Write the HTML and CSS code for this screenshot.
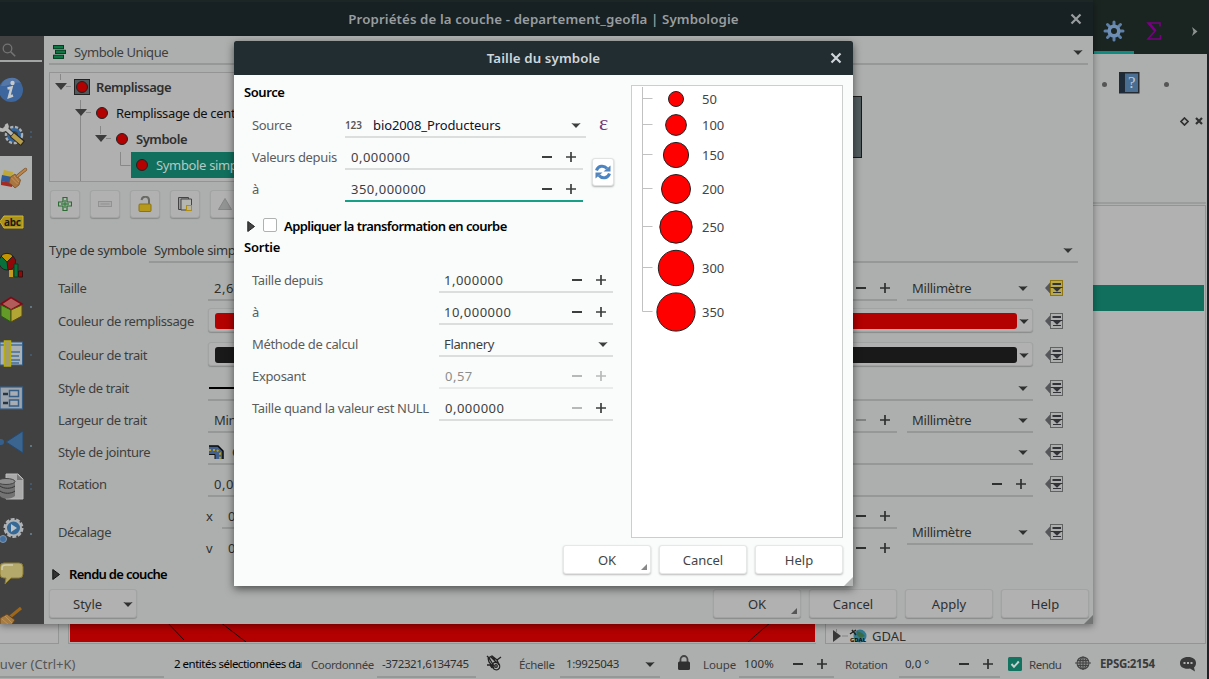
FILE: index.html
```html
<!DOCTYPE html>
<html lang="fr">
<head>
<meta charset="utf-8">
<title>Taille du symbole</title>
<link rel="stylesheet" href="styles.css">
</head>
<body>
<svg class="defs" width="0" height="0">
  <symbol id="minus" viewBox="0 0 24 24"><path d="M7 12h10" stroke="currentColor" stroke-width="2"/></symbol>
  <symbol id="plus" viewBox="0 0 24 24"><path d="M7 12h10M12 7v10" stroke="currentColor" stroke-width="1.7"/></symbol>
  <symbol id="down" viewBox="0 0 20 20"><path d="M5.300 8q4.700 1.200 9.400 0L10 13z" fill="currentColor"/></symbol>
  <symbol id="close" viewBox="0 0 12 12"><path d="M1.5 1.5l9 9M10.500 1.500l-9 9" stroke="currentColor" stroke-width="2.200"/></symbol>
  <symbol id="dd" viewBox="0 0 18 16">
    <path d="M0 8l5-5.500v11z" fill="#55575a" stroke="none"/>
    <rect class="ddbox" x="5.500" y=".5" width="12" height="15" stroke-width="1"/>
    <path d="M7.500 4h8.500" stroke="#313338" stroke-width="2"/><path d="M5.500 7.500h12M8 12.500h8" stroke="#313338" stroke-width="1"/><path d="M7.500 7.500h9L12 11.800z" fill="#313338" stroke="none"/>
  </symbol>
</svg>
<div class="app">
  <div class="topbar">
    <div class="tab"><svg width="22" height="22" viewBox="-11 -11 22 22"><g stroke="#5e80a8" stroke-width="3" stroke-linecap="round"><path d="M0-9V-5M0 9V5M-9 0H-5M9 0H5M-6.500-6.500l3 3M6.500 6.500l-3-3M-6.500 6.500l3-3M6.500-6.500l-3 3"/></g><circle r="4.800" fill="none" stroke="#6d8db3" stroke-width="3.600"/></svg></div>
    <div class="sigma"><svg width="16" height="20" viewBox="0 0 16 20"><path d="M14 5.500V2H2l7 8-7 8h12.500v-4" fill="none" stroke="#780083" stroke-width="1.600"/><path d="M3 2l6.500 8" stroke="#780083" stroke-width="2.500"/></svg></div>
    <svg class="more" width="6" height="9" viewBox="0 0 6 9"><path d="M0 0l5.500 4.500L0 9l1.500-4.500z" fill="#8c9290"/></svg>
  </div>
  <div class="work">
    <div class="browserpane"></div>
    <div class="map"><svg width="746" height="20" viewBox="0 0 746 20"><path d="M97 0l17 18M150 0l26 20M701 0l-23 20" stroke="#1b1111"/></svg></div>
    <div class="rightpane">
      <div class="helpbar"><i class="dot"></i><svg width="21" height="22" viewBox="0 0 21 22"><rect x=".75" y=".75" width="19" height="20" fill="#4a6d92" stroke="#252a31" stroke-width="1.500"/><rect x="1" y="1" width="5" height="20" fill="#1e2a38"/><text x="9" y="16" class="qm">?</text></svg><i class="dot"></i></div>
      <div class="dockbar"><svg width="9" height="9" viewBox="0 0 9 9"><path d="M4.500 1L8 4.500 4.500 8 1 4.500z" fill="none" stroke="#303030" stroke-width="1.700"/></svg><svg width="8" height="8" viewBox="0 0 8 8"><path d="M1 1l6 6M7 1L1 7" stroke="#303030" stroke-width="2.200"/></svg></div>
      <div class="toolbox">
        <div class="picked"></div>
        <div class="gdal"><svg width="40" height="14" viewBox="0 0 40 14"><path d="M3 1l8 6-8 6z" fill="#383838" /><path d="M6.500 0v3M12 7h6" stroke="#858585"/><circle cx="30" cy="7" r="6.500" fill="#337c91"/><path d="M27 2l5 2 3 3-5 2-3-3z" fill="#386b45"/><path d="M20 5l6-4M22 1l4 5" stroke="#222" stroke-width="1.500"/><text x="20" y="13" class="gd">GDAL</text></svg><span>GDAL</span></div>
      </div>
    </div>
  </div>
  <div class="status">
    <div class="locate">ouver (Ctrl+K)</div>
    <div class="msg">2 entités sélectionnées dans</div>
    <div class="s-label l-coord">Coordonnée</div><div class="s-field f-coord">-372321,6134745</div>
    <svg class="mouse" width="16" height="16" viewBox="0 0 16 16"><g fill="none" stroke="#222" stroke-width="1.300"><path d="M2 3l4-2 5 4 2 5M2 3l1 4 5 6M5 2l6 6M1 10h3l2 3M11 5l4-3M3 3l5 8M7 2l3 6M1 1l3 3"/><ellipse cx="10" cy="11" rx="3.500" ry="4" transform="rotate(-35 10 11)"/><circle cx="10" cy="11" r="1.300"/></g></svg>
    <div class="s-label l-scale">Échelle</div><div class="s-field f-scale"><span>1:9925043</span><svg class="i20"><use href="#down"/></svg></div>
    <svg class="lock" width="12" height="15" viewBox="0 0 12 15"><path d="M2.500 7V4.500a3.500 3.500 0 0 1 7 0V7" fill="none" stroke="#444" stroke-width="1.800"/><rect y="6.500" width="12" height="8.500" rx="1.500" fill="#303030"/></svg>
    <div class="s-label l-zoom">Loupe</div><div class="s-field f-zoom"><span>100%</span><svg class="i24"><use href="#minus"/></svg><svg class="i24"><use href="#plus"/></svg></div>
    <div class="s-label l-rot">Rotation</div><div class="s-field f-rot"><span>0,0 °</span><svg class="i24"><use href="#minus"/></svg><svg class="i24"><use href="#plus"/></svg></div>
    <svg class="check" width="14" height="14" viewBox="0 0 14 14"><rect width="14" height="14" rx="1.500" fill="#117360"/><path d="M3.500 7l2.500 2.800L10.800 4.500" fill="none" stroke="#c8d0ce" stroke-width="2"/></svg>
    <div class="s-label l-render">Rendu</div>
    <svg class="globe" width="16" height="15" viewBox="0 0 16 15"><circle cx="8" cy="7" r="6" fill="#8a8b8b"/><g fill="none" stroke="#444" stroke-width="1.100"><circle cx="8" cy="7" r="6"/><ellipse cx="8" cy="7" rx="3" ry="6"/><path d="M8 1v13M0 7h16M2 4.500h12M2 9.500h12"/></g></svg>
    <div class="epsg">EPSG:2154</div>
    <svg class="bubble" width="16" height="15" viewBox="0 0 16 15"><path d="M8 0c5 0 8 2.500 8 6 0 2-1 3.500-2 4.500l1 4-5-3C4 12.500 0 10 0 6.200 0 2.500 3 0 8 0z" fill="#393939"/><path d="M3.500 6h2M7 6h2M10.500 6h2" stroke="#b0b0b0" stroke-width="2"/></svg>
  </div>
</div>

<div class="win props">
  <div class="bar"><span>Propriétés de la couche - departement_geofla | Symbologie</span><svg class="x"><use href="#close"/></svg></div>
  <div class="content">
    <nav class="side">
      <div class="find"><svg width="14" height="14" viewBox="0 0 14 14"><circle cx="5.500" cy="5.500" r="4.300" fill="none" stroke="#737473" stroke-width="1.300"/><path d="M8.700 8.700l4.500 4.500" stroke="#737473" stroke-width="1.600"/></svg></div>
      <svg class="nv" viewBox="0 0 32 44"><circle cx="11" cy="22" r="12" fill="#3c669d"/><path d="M1 18a11 11 0 0 1 20-3c-8-2-12 4-20 3z" fill="#5477a8"/><circle cx="12.500" cy="15" r="2.200" fill="#c6c9cc"/><path d="M7.500 20.500l4-1-2.500 9.500 4-1.500" fill="none" stroke="#c6c9cc" stroke-width="2.500"/></svg>
      <svg class="nv" viewBox="0 0 32 44"><circle cx="14" cy="23" r="7.500" fill="none" stroke="#a9b0b7" stroke-width="3.500" stroke-dasharray="3 1.500"/><circle cx="14" cy="23" r="5.500" fill="none" stroke="#31649a" stroke-width="3"/><path d="M5 16l10 9" stroke="#33332f" stroke-width="5.500"/><path d="M-1 17c5 3 10-1 7-5" fill="none" stroke="#b7b7b5" stroke-width="3.500"/><path d="M4 15l10 9" stroke="#b7b7b5" stroke-width="3.500"/><path d="M12 22.500l11 9" stroke="#2a2722" stroke-width="6.500"/><path d="M12.500 23l9.500 8" stroke="#b59d4b" stroke-width="4.500"/><path d="M31 19v2M31 24v2" stroke="#467199"/></svg>
      <svg class="nv sel" viewBox="0 0 32 44"><path d="M4 14l9 2-1 7-10-2z" fill="#c0a838"/><path d="M2 19l10 2-2 6-9-2z" fill="#315b97"/><path d="M1 25l12 2-1 4-11-2z" fill="#a32b24"/><path d="M10.500 21l4.500-3 5.500 6-1.500 5-4 3-3-3-3-2z" fill="#a97540" stroke="#7a5027" stroke-width=".8"/><path d="M11.500 22l6 6M14 20l5 6" stroke="#c89258"/><path d="M17.500 20l8-6.500" stroke="#7a5027" stroke-width="3.400" stroke-linecap="round"/><path d="M17.500 20l8-6.500" stroke="#bd864c" stroke-width="2.200" stroke-linecap="round"/></svg>
      <svg class="nv" viewBox="0 0 32 44"><path d="M0 21.500l4-5.500h19v12H4z" fill="#ad9319" stroke="#d0b72d"/><text x="4" y="26" class="abc">abc</text></svg>
      <svg class="nv" viewBox="0 0 32 44"><circle cx="7" cy="18" r="8" fill="#08713b" stroke="#222"/><path d="M7 18L1 12a8 8 0 0 1 12 0z" fill="#c29500" stroke="#222"/><path d="M7 18l6-6a8 8 0 0 1-5 14z" fill="#920808" stroke="#222"/><path d="M9 26h4v7H9z" fill="#c49a20"/><path d="M14 20h4v13h-4z" fill="#08713b" stroke="#15351f"/><path d="M18.500 27h4v6h-4z" fill="#920808" stroke="#321111"/></svg>
      <svg class="nv" viewBox="0 0 32 44"><path d="M1 16l10-6.500L22 16l-11 6z" fill="#b25c5c" stroke="#800a14" stroke-width="1.500"/><path d="M1 17l10 5v12L1 28z" fill="#649a27" stroke="#285d0b"/><path d="M22 17l-11 5v12l11-6z" fill="#b3a535" stroke="#5a4810"/><path d="M31 18v2" stroke="#83a8c3"/></svg>
      <svg class="nv" viewBox="0 0 32 44"><rect x="0" y="10" width="22.500" height="23" fill="#a9b0b6" stroke="#365e85"/><path d="M0 13h22M8 20h12M8 24h11M8 28h12M8 31h11" stroke="#446f95" stroke-width="1.600"/><rect x="4.500" y="9" width="6" height="25" fill="#a39c68" stroke="#b7ad10" stroke-width="1.500"/><path d="M31 22v2" stroke="#467199"/></svg>
      <svg class="nv" viewBox="0 0 32 44"><rect x="0" y="11" width="22.500" height="22" fill="#9ba4ad" stroke="#365e85" stroke-width="1.200"/><path d="M3 18h5M3 27h5" stroke="#263642" stroke-width="2.500"/><rect x="9.500" y="14.500" width="9" height="6" fill="#a7adb2" stroke="#365e85" stroke-width="1.500"/><rect x="9.500" y="24" width="9" height="6" fill="#a7adb2" stroke="#365e85" stroke-width="1.500"/></svg>
      <svg class="nv" viewBox="0 0 32 44"><circle cx="1" cy="22" r="3" fill="#365f8b"/><path d="M6 22l17-11v22z" fill="#3b648e" stroke="#254b73"/><path d="M31 25v2" stroke="#83a8c3"/></svg>
      <svg class="nv" viewBox="0 0 32 44"><path d="M6 10h12l5 5v20H6z" fill="#aaa" stroke="#bbb"/><path d="M17 10v6h6" fill="#777"/><path d="M0 17v15c3 4 12 3 15 0V17z" fill="#737373"/><path d="M0 22c4 3 11 3 15 0M0 27c4 3 11 3 15 0" fill="none" stroke="#333"/><ellipse cx="6" cy="17.500" rx="9" ry="3" fill="#8d8d8d" stroke="#444"/><path d="M31 19v2M31 24v2" stroke="#467199"/></svg>
      <svg class="nv" viewBox="0 0 32 44"><circle cx="13.500" cy="20" r="8.500" fill="none" stroke="#b0b3b6" stroke-width="3" stroke-dasharray="3.700 1.600"/><circle cx="13.500" cy="20" r="7.500" fill="#356894" stroke="#aeb2b5" stroke-width="2"/><path d="M11 16l6 4-6 4z" fill="#bdc4c9"/><circle cx="3" cy="31" r="3.500" fill="#4370a0" stroke="#8295a8"/><path d="M31 25v2" stroke="#83a8c3"/></svg>
      <svg class="nv" viewBox="0 0 32 44"><path d="M4 11h15q4 0 4 4v7q0 4-4 4h-8l-6 6 1-6H4q-4 0-4-4v-7q0-4 4-4z" fill="#b4a96a" stroke="#8d7d31"/><path d="M2 18v-2q0-3 4-3h7" fill="none" stroke="#cfcbb1" stroke-width="1.500"/></svg>
      <svg class="nv last" viewBox="0 0 32 28"><path d="M10 21L21 12" stroke="#9e671a" stroke-width="3"/><path d="M0 22l7-4 8 6-4 6H0z" fill="#a77c43" stroke="#64421d"/><path d="M2 23l7 6M5 20l7 7" stroke="#c19256"/></svg>
    </nav>
    <div class="main">
      <div class="renderer"><svg width="13" height="14" viewBox="0 0 13 14"><g fill="#087942" stroke="#043c21"><rect x=".5" y=".5" width="10" height="3.200"/><rect x="2.500" y="5.300" width="10" height="3.200"/><rect x=".5" y="10.200" width="10" height="3.200"/></g></svg><span>Symbole Unique</span><svg class="i20"><use href="#down"/></svg></div>
      <div class="symrow">
        <div class="tree">
          <div class="node b"><svg width="46" height="26" viewBox="0 0 46 26"><path d="M10.500 0v6M16 12.500h5" stroke="#888"/><path d="M5 9h12l-6 7z" fill="#3c3c3c"/><rect x="24.500" y="5.500" width="15" height="15" fill="#50595b" stroke="#222"/><circle cx="32" cy="13" r="5.500" fill="#b30000" stroke="#222"/></svg><span>Remplissage</span></div>
          <div class="node k"><svg width="66" height="26" viewBox="0 0 66 26"><path d="M30.500 0v26M36 12.500h5" stroke="#888"/><path d="M25 9h12l-6 7z" fill="#3c3c3c"/><circle cx="52" cy="13" r="5.500" fill="#b30000" stroke="#222"/></svg><span>Remplissage de centroïde</span></div>
          <div class="node b"><svg width="86" height="26" viewBox="0 0 86 26"><path d="M30.500 0v26M50.500 0v8M56 12.500h5" stroke="#888"/><path d="M45 9h12l-6 7z" fill="#3c3c3c"/><circle cx="72" cy="13" r="5.500" fill="#b30000" stroke="#222"/></svg><span>Symbole</span></div>
          <div class="node"><svg width="81" height="29" viewBox="0 0 81 29"><path d="M30.500 0v29M70.500 0v13.500h10" fill="none" stroke="#888"/></svg><div class="nodesel"><svg width="25" height="26" viewBox="0 0 25 26"><circle cx="11" cy="13" r="5.500" fill="#b30000" stroke="#222"/></svg>Symbole simple</div></div>
        </div>
        <div class="preview"></div>
      </div>
      <div class="tools">
        <div class="tb"><svg width="14" height="14" viewBox="0 0 14 14"><path d="M5 .5h4V5h4.500v4H9v4.500H5V9H.5V5H5z" fill="#b4b8b4" stroke="#2b6b32" stroke-width="1.200"/><path d="M7 3v8M3 7h8" stroke="#3d8044" stroke-width="1.400"/></svg></div>
        <div class="tb"><svg width="14" height="14" viewBox="0 0 14 14"><rect x=".5" y="4.500" width="13" height="5" fill="#aaa" stroke="#929292"/><path d="M2.500 7h9" stroke="#919191"/></svg></div>
        <div class="tb"><svg width="14" height="16" viewBox="0 0 14 16"><path d="M3.500 4c1-5 8-4 7.500 1v3" fill="none" stroke="#6a6a65" stroke-width="2"/><rect x="1" y="8" width="12" height="7.500" rx="1" fill="#b6991a" stroke="#8a7316"/></svg></div>
        <div class="tb"><svg width="16" height="16" viewBox="0 0 16 16"><path d="M1.500 1.500h10v12h-10z" fill="#999" stroke="#444"/><path d="M4 3h10.500v11H4z" fill="#b5b5b2" stroke="#444"/><rect x="9.500" y="9.500" width="5" height="5" fill="#b9b49b" stroke="#b28e10"/></svg></div>
        <div class="tb"><svg width="16" height="14" viewBox="0 0 16 14"><path d="M8 1.500l6.500 11h-13z" fill="#929393" stroke="#858686"/></svg></div>
      </div>
      <div class="type"><span>Type de symbole</span><div class="fld"><span>Symbole simple</span><svg class="i20"><use href="#down"/></svg></div></div>
      <div class="row r32"><label>Taille</label><div class="fld sp num"><span>2,600000</span><svg class="i24"><use href="#minus"/></svg><svg class="i24"><use href="#plus"/></svg></div><div class="fld unit"><span>Millimètre</span><svg class="i20"><use href="#down"/></svg></div><svg class="ddi on"><use href="#dd"/></svg></div>
      <div class="row r34"><label>Couleur de remplissage</label><div class="color"><i class="red"></i><svg class="i14" viewBox="3 3 14 14"><path d="M5.300 8q4.700 1.200 9.400 0L10 13z" fill="#2c2d2d"/></svg></div><svg class="ddi"><use href="#dd"/></svg></div>
      <div class="row r34"><label>Couleur de trait</label><div class="color"><i class="black"></i><svg class="i14" viewBox="3 3 14 14"><path d="M5.300 8q4.700 1.200 9.400 0L10 13z" fill="#2c2d2d"/></svg></div><svg class="ddi"><use href="#dd"/></svg></div>
      <div class="row r32"><label>Style de trait</label><div class="fld line"><b></b><svg class="i20"><use href="#down"/></svg></div><svg class="ddi"><use href="#dd"/></svg></div>
      <div class="row r32"><label>Largeur de trait</label><div class="fld sp"><span>Minimale</span><svg class="i24 off"><use href="#minus"/></svg><svg class="i24"><use href="#plus"/></svg></div><div class="fld unit"><span>Millimètre</span><svg class="i20"><use href="#down"/></svg></div><svg class="ddi"><use href="#dd"/></svg></div>
      <div class="row r32"><label>Style de jointure</label><div class="fld join"><svg width="15" height="14" viewBox="0 0 15 14"><path d="M0 1h9l5 5v8H6V9H0z" fill="#41608f"/><path d="M0 1h9l5 5v8" fill="none" stroke="#080808" stroke-width="1.500"/><path d="M0 5h8l3 3v6" fill="none" stroke="#b39b24" stroke-width="2" stroke-dasharray="2 2"/><path d="M0 9.500h6V14" fill="none" stroke="#111"/></svg><span>Oblique</span><svg class="i20"><use href="#down"/></svg></div><svg class="ddi"><use href="#dd"/></svg></div>
      <div class="row r32"><label>Rotation</label><div class="fld num"><span>0,00 °</span><svg class="i24"><use href="#minus"/></svg><svg class="i24"><use href="#plus"/></svg></div><svg class="ddi"><use href="#dd"/></svg></div>
      <div class="row offset"><label>Décalage</label>
        <div class="xy"><div class="axis"><em>x</em><div class="fld num"><span>0,000000</span><svg class="i24"><use href="#minus"/></svg><svg class="i24"><use href="#plus"/></svg></div></div>
        <div class="axis"><em>v</em><div class="fld num bare"><span>0,000000</span><svg class="i24"><use href="#minus"/></svg><svg class="i24"><use href="#plus"/></svg></div></div></div>
        <div class="fld unit"><span>Millimètre</span><svg class="i20"><use href="#down"/></svg></div><svg class="ddi"><use href="#dd"/></svg></div>
      <div class="layer"><svg width="8" height="11" viewBox="0 0 8 11"><path d="M.8.500L7.500 5.500.8 10.500z" fill="#333" stroke="#111"/></svg><b>Rendu de couche</b></div>
      <div class="foot"><div class="btn style"><span>Style</span><svg class="i20"><use href="#down"/></svg></div><div class="btn first">OK<i class="corner"></i></div><div class="btn">Cancel</div><div class="btn">Apply</div><div class="btn">Help</div></div>
    </div>
  </div>
  <i class="grip"></i>
</div>

<div class="win modal">
  <div class="bar"><span>Taille du symbole</span><svg class="x"><use href="#close"/></svg></div>
  <div class="body">
    <div class="form">
      <h3>Source</h3>
      <div class="srcgrid">
        <label>Source</label><div class="fld src"><small>123</small><span>bio2008_Producteurs</span><svg class="i20"><use href="#down"/></svg></div><div class="eps">ε</div>
        <label>Valeurs depuis</label><div class="fld num w238"><span>0,000000</span><svg class="i24"><use href="#minus"/></svg><svg class="i24"><use href="#plus"/></svg></div>
        <div class="refresh"><svg width="16" height="16" viewBox="0 0 16 16"><g fill="none" stroke="#4c84c2" stroke-width="3"><path d="M1.500 6.500C3 1.500 9 1 12 4.500"/><path d="M14.500 9.500C13 14.500 7 15 4 11.500"/></g><path d="M15.500 1.500v6H8.500zM.5 14.500v-6h7z" fill="#5286bd"/></svg></div>
        <label>à</label><div class="fld num w238 focus"><span>350,000000</span><svg class="i24"><use href="#minus"/></svg><svg class="i24"><use href="#plus"/></svg></div>
      </div>
      <div class="curve"><svg width="8" height="11" viewBox="0 0 8 11"><path d="M.8.500L7.500 5.500.8 10.500z" fill="#444" stroke="#222"/></svg><i class="cb"></i><b>Appliquer la transformation en courbe</b></div>
      <h3 class="out">Sortie</h3>
      <div class="outgrid">
        <label>Taille depuis</label><div class="fld num"><span>1,000000</span><svg class="i24"><use href="#minus"/></svg><svg class="i24"><use href="#plus"/></svg></div>
        <label>à</label><div class="fld num"><span>10,000000</span><svg class="i24"><use href="#minus"/></svg><svg class="i24"><use href="#plus"/></svg></div>
        <label>Méthode de calcul</label><div class="fld"><span>Flannery</span><svg class="i20"><use href="#down"/></svg></div>
        <label>Exposant</label><div class="fld num zero disabled"><span>0,57</span><svg class="i24"><use href="#minus"/></svg><svg class="i24"><use href="#plus"/></svg></div>
        <label>Taille quand la valeur est NULL</label><div class="fld num zero"><span>0,000000</span><svg class="i24 off"><use href="#minus"/></svg><svg class="i24"><use href="#plus"/></svg></div>
      </div>
    </div>
    <div class="legend">
      <svg width="64" height="250" viewBox="0 0 64 250"><path d="M10.500 1v224.500h10M10.500 12.500h10M10.500 38.500h10M10.500 68.500h10M10.500 102.500h10M10.500 140.500h10M10.500 181.500h10" fill="none" stroke="#c1c1c1"/><g fill="#f00" stroke="#222"><circle cx="44" cy="13" r="7.500"/><circle cx="44" cy="39" r="10.400"/><circle cx="44" cy="69" r="12.600"/><circle cx="44" cy="103" r="14.500"/><circle cx="44" cy="141" r="16.200"/><circle cx="44" cy="182" r="17.700"/><circle cx="44" cy="226" r="19.100"/></g></svg>
      <ul><li>50</li><li>100</li><li>150</li><li>200</li><li>250</li><li>300</li><li>350</li></ul>
    </div>
  </div>
  <div class="actions"><div class="btn">OK<i class="corner"></i></div><div class="btn">Cancel</div><div class="btn">Help</div></div>
  <i class="grip"></i>
</div>
</body>
</html>
```
FILE: styles.css
```css
* { box-sizing: border-box; }
body { margin: 0; width: 1209px; height: 679px; overflow: hidden; position: relative; background: #adafae; font: 13px "Noto Sans", sans-serif; letter-spacing: -.34px; color: #2e2f2f; white-space: nowrap; }
svg { flex: none; display: block; }
.defs { position: absolute; }
.i20 { width: 20px; height: 20px; }
.i24 { width: 24px; height: 24px; }
.i14 { width: 14px; height: 14px; }

/* main application window */
.app { width: 1209px; height: 679px; display: flex; flex-direction: column; border-right: 2px solid #202025; }
.topbar { height: 54px; background: #1a2420; display: flex; justify-content: flex-end; align-items: center; padding: 8px 9px 0 0; flex: none; }
.tab { width: 40px; height: 43px; margin: 0 1px -3px 0; padding-bottom: 1px; display: flex; align-items: center; justify-content: center; border-bottom: 3px solid #108b82; }
.sigma { width: 38px; display: flex; justify-content: center; }
.more { margin-left: 19px; }
.work { height: 590px; display: flex; align-items: flex-end; flex: none; }
.browserpane { width: 59px; height: 590px; background: #b2b1b1; border: solid #949695; border-width: 0 1px 1px 0; }
.map { width: 748px; height: 590px; margin-left: 9px; padding: 0 1px 1px 1px; border-left: 1px solid #949695; border-bottom: 1px solid #949695; background: #b30000; background-clip: content-box; display: flex; align-items: flex-end; }
.rightpane { margin-left: 9px; width: 381px; height: 590px; display: flex; flex-direction: column; }
.helpbar { height: 61px; display: flex; justify-content: flex-end; align-items: center; padding-right: 37px; }
.dot { width: 5px; height: 5px; border-radius: 50%; background: #555; }
.helpbar svg { margin: 0 24px 3px 12px; }
.qm { font: 17px "Liberation Serif", serif; fill: #b9c7d5; }
.dockbar { height: 89px; display: flex; justify-content: flex-end; gap: 6px; padding: 2px 3px 0 0; border-bottom: 2px solid #9b9d9c; }
.toolbox { margin-top: 1px; flex: 1; border: 1px solid #949494; background: #b2b1b1; display: flex; flex-direction: column; justify-content: space-between; }
.picked { margin: 79px 1px 0 0; height: 26px; background: #11705d; }
.gdal { display: flex; align-items: center; gap: 2px; padding: 0 0 0 4px; height: 14px; letter-spacing: 0; }
.gdal span { margin-top: -1px; }
.gd { font: bold 6px "Noto Sans", sans-serif; fill: #080808; }
.status { flex: 1; display: flex; align-items: center; font-size: 11.5px; height: 36px; }
.locate { width: 164px; height: 28px; border-bottom: 2px solid #969897; line-height: 28px; color: #555; font-size: 13px; text-indent: -8px; margin-top: 5px; overflow: hidden; letter-spacing: 0; }
.msg { width: 128px; overflow: hidden; margin: 4px 9px 0 10px; color: #000; letter-spacing: -.5px; }
.s-label { margin-top: 5px; color: #3d3e3e; }
.l-coord { width: 66px; letter-spacing: -.4px; }
.s-field { display: flex; align-items: center; height: 26px; margin-top: 7px; padding-bottom: 1px; border-bottom: 2px solid #969897; padding-left: 5px; letter-spacing: -.1px; }
.s-field span { flex: 1; }
.f-coord { width: 99px; letter-spacing: -.38px; }
.mouse { margin: 3px 17px 0 10px; }
.l-scale { width: 41px; }
.f-scale { width: 100px; padding-left: 6px; letter-spacing: -.3px; }
.lock { margin: 2px 13px 0 18px; }
.l-zoom { width: 36px; letter-spacing: -.1px; }
.f-zoom { width: 95px; letter-spacing: .2px; }
.l-rot { margin-left: 11px; width: 54px; letter-spacing: -.45px; }
.f-rot { width: 101px; padding-left: 6px; letter-spacing: 0; }
.check { margin: 5px 7px 0 8px; }
.l-render { width: 46px; letter-spacing: -.5px; }
.globe { margin-top: 3px; }
.epsg { margin: 3px 0 0 9px; width: 80px; font-weight: bold; color: #3a3b3b; }
.bubble { margin-top: 5px; }

/* windows */
.win { position: absolute; box-shadow: 0 2px 7px rgba(0,0,0,.4); }
.bar { display: flex; align-items: center; justify-content: center; font-size: 13.3px; font-weight: 600; letter-spacing: .1px; }
.bar span { flex: 1; text-align: center; }
.x { width: 12px; height: 12px; }
.fld { display: flex; align-items: center; height: 26px; border-bottom: 2px solid #969897; padding: 2px 0 0 6px; }
.fld > span { flex: 1; }
.num { letter-spacing: .48px; }
.grip { position: absolute; right: 0; bottom: 0; border-style: solid; border-width: 0 0 9px 9px; border-color: transparent transparent #737575 transparent; }
.btn { width: 88px; height: 29px; border: 1px solid #a2a4a3; border-radius: 3px; background: #b2b1b1; box-shadow: 0 1px 1px rgba(0,0,0,.2); display: flex; align-items: center; justify-content: center; position: relative; letter-spacing: 0; }
.corner { position: absolute; right: 3px; bottom: 3px; border-style: solid; border-width: 0 0 6px 6px; border-color: transparent transparent #555 transparent; }

.props { left: 0; top: 0; width: 1093px; height: 624px; background: #adafae; }
.props .bar { height: 36px; border-top: 2px solid #1c2725; background: #172023; color: #989d9f; padding: 0 11px 0 17px; }
.content { display: flex; height: 588px; }
.side { width: 44px; background: #414141; overflow: hidden; }
.find { width: 42px; height: 26px; padding: 7px 0 0 2px; border-bottom: 2px solid #a3a4a4; margin-bottom: 6px; }
.nv { width: 32px; height: 44px; }
.nv.last { height: 28px; }
.sel { background: #b0b2b1; }
.abc { font: bold 10px "Noto Sans", sans-serif; fill: #1b1a13; }
.main { flex: 1; padding-left: 5px; min-width: 0; }
.renderer { width: 1039px; height: 29px; display: flex; align-items: center; padding-left: 4px; border-bottom: 2px solid #969897; padding-top: 4px; }
.renderer span { flex: 1; margin-left: 8px; color: #3d3e3e; letter-spacing: -.42px; }
.symrow { display: flex; margin-top: 7px; height: 110px; }
.tree { width: 600px; border: 1px solid #949494; background: #b0b0b0; padding-top: 1px; overflow: hidden; }
.node { display: flex; height: 26px; }
.node > span { line-height: 26px; }
.b span { font-weight: 600; letter-spacing: -.45px; }
.k span { color: #101010; }
.nodesel { display: flex; flex: 1; height: 26px; line-height: 26px; background: #11705d; color: #b5c8c3; }
.preview { width: 62px; height: 62px; margin: 24px 0 0 151px; background: #525c5f; border: 1px solid #1a1a1a; }
.tools { display: flex; gap: 10px; height: 28px; margin: 8px 0 0 1px; }
.tb { width: 30px; height: 28px; border: 1px solid #a2a4a3; border-radius: 3px; background: #b1b1b1; box-shadow: 0 1px 1px rgba(0,0,0,.2); display: flex; align-items: center; justify-content: center; }
.type { display: flex; align-items: center; height: 26px; margin-top: 19px; color: #333434; }
.type > span { width: 100px; }
.type .fld { width: 929px; padding-left: 5px; }
.row { display: flex; align-items: center; padding-left: 9px; }
.type + .row { margin-top: 9px; }
.r32 { height: 32px; }
.r34 { height: 34px; }
.row > label { width: 150px; color: #3d3e3e; letter-spacing: -.4px; }
.row > .fld { flex: 1; }
.row .unit { flex: 0 0 126px; margin-left: 10px; padding-left: 5px; letter-spacing: -.25px; }
.ddi { width: 18px; height: 16px; margin: 0 30px 0 12px; fill: none; stroke: #606262; }
.ddi.on { fill: #b8a84e; stroke: #8f7410; }
.row > .color { flex: 1; height: 24px; margin-bottom: 2px; border: 1px solid #a2a4a3; border-radius: 3px; background: #b2b1b1; box-shadow: 0 1px 1px rgba(0,0,0,.2); display: flex; align-items: center; padding: 1px 1px 0 6px; }
.color i { flex: 1; height: 16px; border-radius: 3px; }
.red { background: #b30000; }
.black { background: #191919; }
.line b { width: 500px; height: 2px; background: #000; }
.row > .line { padding-left: 1px; justify-content: space-between; }
.row > .join { padding-left: 1px; }
.join span { margin-left: 8px; }
.off { opacity: .35; }
.offset { height: 64px; }
.xy { flex: 1; margin-left: -2px; }
.axis { display: flex; align-items: center; height: 32px; }
.axis em { font-style: normal; width: 16px; }
.axis .fld { flex: 1; }
.axis .bare { border-color: transparent; }
.layer { display: flex; align-items: center; height: 20px; padding-left: 3px; gap: 9px; color: #000; }
.layer b, .curve b { font-weight: 600; letter-spacing: -.57px; }
.layer b { letter-spacing: -.7px; }
.foot { display: flex; gap: 8px; margin-top: 5px; padding-left: 0; }
.style { justify-content: space-between; padding: 0 0 0 23px; }
.style .i20 { margin-right: -2px; }
.first { margin-left: 568px; }

.modal { left: 234px; top: 41px; width: 619px; height: 545px; background: #fafcfb; color: #434545; border-radius: 2px 2px 0 0; box-shadow: 0 3px 9px rgba(0,0,0,.55); }
.modal .bar { height: 34px; background: #222d32; color: #cfd6da; border-radius: 2px 2px 0 0; padding: 0 11px 0 23px; }
.modal .fld { border-color: #dcdedd; color: #3d3f3f; }
.modal .fld.focus { border-color: #16a085; }
.modal .grip { border-color: transparent transparent #b3b5b4 transparent; }
.modal label { color: #5b5d5d; letter-spacing: -.33px; }
.body { display: flex; height: 463px; }
.form { width: 397px; padding: 9px 0 0 10px; }
h3 { margin: 0; font-size: 13px; font-weight: 600; line-height: 16px; letter-spacing: -.4px; color: #000; }
.srcgrid { display: grid; grid-template-columns: 93px 241px 24px; grid-template-rows: repeat(3, 32px); align-items: center; padding-left: 8px; margin-top: 9px; }
.srcgrid .w238 { width: 238px; }
.modal .src { padding-left: 0; }
.src small { font-size: 10px; font-weight: 600; width: 28px; color: #555; letter-spacing: -.1px; }
.modal .src span { color: #101030; letter-spacing: -.1px; }
.eps { font: 22px/24px "Liberation Serif", serif; color: #70387a; text-align: center; padding: 0 0 4px 11px; letter-spacing: 0; }
.refresh { grid-column: 3; grid-row: 2 / 4; margin: 0 0 2px 6px; width: 22px; height: 28px; border: 1px solid #e1e3e2; border-radius: 3px; background: #fff; box-shadow: 0 1px 2px rgba(0,0,0,.3); display: flex; align-items: center; justify-content: center; }
.curve { display: flex; align-items: center; height: 22px; margin-top: 10px; padding-left: 3px; color: #000; }
.cb { width: 14px; height: 14px; border: 1px solid #b0b2b1; border-radius: 2px; background: #fff; margin: -2px 7px 0 8px; }
.out { margin-top: 2px; letter-spacing: -.2px; }
.outgrid { display: grid; grid-template-columns: 187px 174px; grid-auto-rows: 32px; align-items: center; padding-left: 8px; margin-top: 9px; }
.outgrid .fld { padding-left: 5px; }
.outgrid .zero { padding-left: 6px; }
.modal .disabled { color: #8c8e8d; border-color: #e9ebea; }
.disabled svg { opacity: .6; }
.legend { margin-top: 10px; width: 212px; height: 453px; border: 1px solid #cccecd; background: #fff; display: flex; letter-spacing: 0; }
.legend ul { list-style: none; margin: 0; padding: 0 0 0 6px; display: grid; grid-template-rows: 26px 26px 34px 34px 42px 40px 48px; align-items: center; height: 250px; }
.actions { display: flex; justify-content: flex-end; gap: 8px; padding: 7px 10px 0 0; }
.modal .btn { background: #fff; border-color: #e6e8e7; box-shadow: 0 1px 2px rgba(0,0,0,.25); }
.modal .corner { border-bottom-color: #888; }
```
